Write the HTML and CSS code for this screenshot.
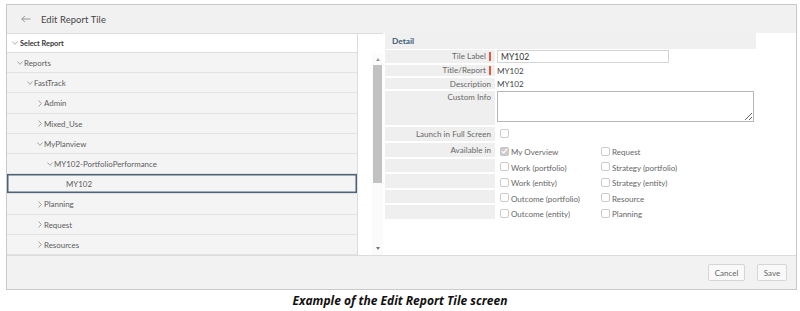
FILE: index.html
```html
<!DOCTYPE html>
<html>
<head>
<meta charset="utf-8">
<title>Edit Report Tile</title>
<link rel="stylesheet" href="styles.css">
</head>
<body>
<div class="frame">
  <div class="topbar">
    <svg class="back" width="10" height="8" viewBox="0 0 10 8"><path d="M9.5 4H0.8M3.8 1L0.8 4L3.8 7" fill="none" stroke="#8c8c8c" stroke-width="0.9"/></svg>
    <span class="title">Edit Report Tile</span>
  </div>
  <div class="main">
    <div class="left">
      <div class="tree">
        <div class="tree-head"><svg class="chd" width="6" height="4" viewBox="0 0 6 4"><path d="M0.4 0.5L3 3.3L5.6 0.5" fill="none" stroke="#999" stroke-width="0.8"/></svg>Select Report</div>
        <div class="row l0"><span class="ch"><svg width="6" height="4" viewBox="0 0 6 4"><path d="M0.4 0.5L3 3.3L5.6 0.5" fill="none" stroke="#8e8e8e" stroke-width="0.8"/></svg></span>Reports</div>
        <div class="row l1"><span class="ch"><svg width="6" height="4" viewBox="0 0 6 4"><path d="M0.4 0.5L3 3.3L5.6 0.5" fill="none" stroke="#8e8e8e" stroke-width="0.8"/></svg></span>FastTrack</div>
        <div class="row l2"><span class="ch"><svg class="chr" width="4" height="7" viewBox="0 0 4 7"><path d="M0.6 0.5L3.4 3.5L0.6 6.5" fill="none" stroke="#8e8e8e" stroke-width="0.8"/></svg></span>Admin</div>
        <div class="row l2"><span class="ch"><svg class="chr" width="4" height="7" viewBox="0 0 4 7"><path d="M0.6 0.5L3.4 3.5L0.6 6.5" fill="none" stroke="#8e8e8e" stroke-width="0.8"/></svg></span>Mixed_Use</div>
        <div class="row l2"><span class="ch"><svg width="6" height="4" viewBox="0 0 6 4"><path d="M0.4 0.5L3 3.3L5.6 0.5" fill="none" stroke="#8e8e8e" stroke-width="0.8"/></svg></span>MyPlanview</div>
        <div class="row l3"><span class="ch"><svg width="6" height="4" viewBox="0 0 6 4"><path d="M0.4 0.5L3 3.3L5.6 0.5" fill="none" stroke="#8e8e8e" stroke-width="0.8"/></svg></span>MY102-PortfolioPerformance</div>
        <div class="row leaf selected">MY102</div>
        <div class="row l2"><span class="ch"><svg class="chr" width="4" height="7" viewBox="0 0 4 7"><path d="M0.6 0.5L3.4 3.5L0.6 6.5" fill="none" stroke="#8e8e8e" stroke-width="0.8"/></svg></span>Planning</div>
        <div class="row l2"><span class="ch"><svg class="chr" width="4" height="7" viewBox="0 0 4 7"><path d="M0.6 0.5L3.4 3.5L0.6 6.5" fill="none" stroke="#8e8e8e" stroke-width="0.8"/></svg></span>Request</div>
        <div class="row l2"><span class="ch"><svg class="chr" width="4" height="7" viewBox="0 0 4 7"><path d="M0.6 0.5L3.4 3.5L0.6 6.5" fill="none" stroke="#8e8e8e" stroke-width="0.8"/></svg></span>Resources</div>
      </div>
      <div class="scrollcol">
        <div class="sbar">
          <span class="arr-up"></span>
          <span class="thumb"></span>
          <span class="arr-down"></span>
        </div>
      </div>
    </div>
    <div class="detail">
      <div class="detail-head">Detail</div>
      <div class="form">
        <div class="frow h-tile">
          <div class="lbl"><span class="req">Tile Label</span></div>
          <div class="val"><input class="inp" type="text" value="MY102"></div>
        </div>
        <div class="frow h-sm">
          <div class="lbl"><span class="req">Title/Report</span></div>
          <div class="val">MY102</div>
        </div>
        <div class="frow h-sm">
          <div class="lbl">Description</div>
          <div class="val">MY102</div>
        </div>
        <div class="frow h-custom">
          <div class="lbl top">Custom Info</div>
          <div class="val top"><textarea class="ta"></textarea></div>
        </div>
        <div class="frow h-launch">
          <div class="lbl">Launch in Full Screen</div>
          <div class="val"><span class="opt"><span class="cb"></span></span></div>
        </div>
        <div class="frow h-cb">
          <div class="lbl">Available in</div>
          <div class="val low"><span class="opt"><span class="cb on"><svg width="7" height="6" viewBox="0 0 7 6"><path d="M0.8 3.2L2.7 5L6.2 0.9" fill="none" stroke="#fff" stroke-width="1.2"/></svg></span>My Overview</span><span class="opt"><span class="cb"></span>Request</span></div>
        </div>
        <div class="frow h-cb">
          <div class="lbl"></div>
          <div class="val low"><span class="opt"><span class="cb"></span>Work (portfolio)</span><span class="opt"><span class="cb"></span>Strategy (portfolio)</span></div>
        </div>
        <div class="frow h-cb">
          <div class="lbl"></div>
          <div class="val low"><span class="opt"><span class="cb"></span>Work (entity)</span><span class="opt"><span class="cb"></span>Strategy (entity)</span></div>
        </div>
        <div class="frow h-cb">
          <div class="lbl"></div>
          <div class="val low"><span class="opt"><span class="cb"></span>Outcome (portfolio)</span><span class="opt"><span class="cb"></span>Resource</span></div>
        </div>
        <div class="frow h-cb">
          <div class="lbl"></div>
          <div class="val low"><span class="opt"><span class="cb"></span>Outcome (entity)</span><span class="opt"><span class="cb"></span>Planning</span></div>
        </div>
      </div>
    </div>
  </div>
  <div class="footer">
    <button class="btn btn-cancel">Cancel</button>
    <button class="btn btn-save">Save</button>
  </div>
</div>
<p class="caption">Example of the Edit Report Tile screen</p>
</body>
</html>
```

FILE: styles.css
```css
* { box-sizing: border-box; }
html, body { margin: 0; padding: 0; background: #fff; }
body {
  width: 800px;
  height: 311px;
  overflow: hidden;
  font-family: "Lato", "Liberation Sans", sans-serif;
  color: #555;
}
.frame {
  margin: 4px 0 0 6px;
  width: 791px;
  height: 286px;
  border: 1px solid #c9c9c9;
  display: flex;
  flex-direction: column;
}
.topbar {
  height: 28px;
  flex: none;
  background: #f1f1f1;
  display: flex;
  align-items: center;
  padding-left: 14px;
}
.back { margin-right: 10px; display: block; }
.title { font-size: 9.4px; color: #444; letter-spacing: 0.1px; }

.main { height: 222px; flex: none; display: flex; }
.left { width: 376px; flex: none; display: flex; }
.tree {
  width: 351px;
  flex: none;
  border-right: 1px solid #dcdcdc;
  display: flex;
  flex-direction: column;
}
.tree-head {
  height: 20px;
  flex: none;
  border-top: 1px solid #dcdcdc;
  border-bottom: 1px solid #dcdcdc;
  background: #fff;
  display: flex;
  align-items: center;
  padding-left: 5px;
  font-size: 7.3px;
  font-weight: 700;
  color: #333;
}
.chd { margin-right: 2px; display: block; }
.row {
  height: 20.2px;
  flex: none;
  background: #f4f4f4;
  border-bottom: 1px solid #e2e2e2;
  display: flex;
  align-items: center;
  padding-top: 1px;
  font-size: 7.9px;
  color: #5c5c5c;
}
.row .ch { width: 7px; flex: none; display: flex; align-items: center; }
.row .ch svg { display: block; }
.row .ch .chr { margin-left: 1px; }
.l0 { padding-left: 10px; }
.l1 { padding-left: 20px; }
.l2 { padding-left: 30px; }
.l3 { padding-left: 40px; }
.leaf { padding-left: 59px; }
.selected { box-shadow: inset 0 0 0 1.5px #4b6479; }

.scrollcol {
  flex: 1;
  border-top: 1px solid #dcdcdc;
  padding-top: 19px;
  display: flex;
  justify-content: flex-end;
  background: #fff;
}
.sbar {
  width: 11px;
  height: 202px;
  background: #fbfbfb;
  display: flex;
  flex-direction: column;
  align-items: center;
}
.arr-up {
  margin-top: 5px;
  width: 0; height: 0;
  border-left: 2px solid transparent;
  border-right: 2px solid transparent;
  border-bottom: 3px solid #999;
}
.thumb {
  margin-top: 4px;
  width: 9px;
  height: 118px;
  background: #c2c2c2;
}
.arr-down {
  margin-top: auto;
  margin-bottom: 5px;
  width: 0; height: 0;
  border-left: 2px solid transparent;
  border-right: 2px solid transparent;
  border-top: 3px solid #777;
}

.detail { flex: 1; padding-left: 2px; background: #fff; }
.detail-head {
  width: 371px;
  height: 16px;
  background: #f0f0f0;
  padding-left: 7px;
  display: flex;
  align-items: center;
  font-size: 8.3px;
  font-weight: 700;
  color: #3e5c7a;
  margin-bottom: 1px;
}
.form { width: 371px; }
.frow { display: flex; }
.h-tile { height: 15px; }
.h-sm { height: 13px; }
.h-custom { height: 36px; }
.h-launch { height: 16px; }
.h-cb { height: 15.5px; }
.lbl {
  width: 110px;
  flex: none;
  background: #efefef;
  border-bottom: 2px solid #fff;
  padding-right: 4px;
  display: flex;
  justify-content: flex-end;
  align-items: center;
  font-size: 8px;
  color: #666;
  white-space: nowrap;
  letter-spacing: 0.05px;
}
.lbl.top { align-items: flex-start; padding-top: 1px; }
.req {
  border-right: 2px solid #e8573f;
  padding-right: 3px;
  line-height: 9px;
}
.val {
  flex: 1;
  margin-left: 2px;
  padding-bottom: 2px;
  display: flex;
  align-items: center;
  font-size: 8.1px;
  color: #444;
}
.val.top { align-items: flex-start; padding-bottom: 0; }
.val.low { padding-top: 3px; padding-bottom: 0; }
.inp {
  width: 172px;
  height: 13px;
  margin: 0;
  border: 1px solid #d4d4d4;
  padding: 0 0 0 3px;
  font-family: "Lato", "Liberation Sans", sans-serif;
  font-size: 8.6px;
  color: #333;
  background: #fff;
  outline: none;
}
.ta {
  width: 257px;
  height: 31px;
  margin: 0;
  padding: 0;
  border: 1px solid #b6b6b6;
  border-radius: 0;
  background: #fff;
  font-size: 9px;
  resize: both;
  display: block;
}
.opt {
  display: flex;
  align-items: center;
  width: 101px;
  flex: none;
  font-size: 8px;
  color: #666;
  white-space: nowrap;
}
.opt:first-child { margin-left: 3px; }
.cb {
  width: 9px;
  height: 9px;
  flex: none;
  border: 1px solid #cbcbcb;
  border-radius: 2px;
  background: #fff;
  margin-right: 2px;
  margin-top: -2px;
  display: flex;
  align-items: center;
  justify-content: center;
}
.cb.on { background: #cdcdcd; border-color: #c4c4c4; }
.cb svg { display: block; }

.footer {
  flex: 1;
  background: #f2f2f2;
  border-top: 1px solid #dcdcdc;
  display: flex;
  justify-content: flex-end;
  align-items: center;
  padding-right: 9px;
  gap: 12px;
}
.btn {
  height: 17px;
  margin: 0;
  padding: 0;
  border: 1px solid #d6d6d6;
  border-radius: 2px;
  background: #f9f9f9;
  font-family: "Lato", "Liberation Sans", sans-serif;
  font-size: 8px;
  color: #666;
}
.btn-cancel { width: 37px; }
.btn-save { width: 30px; }

.caption {
  margin: 4px 0 0;
  text-align: center;
  font-family: "Open Sans", "Liberation Sans", sans-serif;
  font-size: 12px;
  line-height: 14px;
  font-weight: 700;
  font-style: italic;
  color: #111;
}
```
